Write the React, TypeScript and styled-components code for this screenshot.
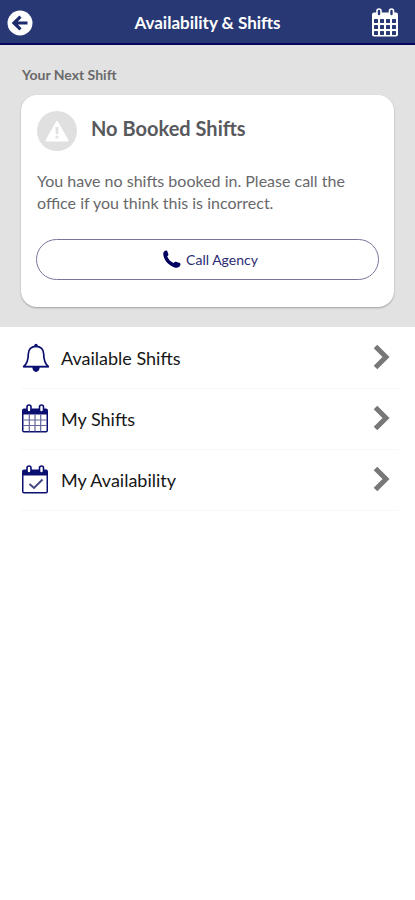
import React from "react";
import styled, { createGlobalStyle } from "styled-components";

const navy = "#0b1070";

const GlobalStyle = createGlobalStyle`
  *, *::before, *::after { box-sizing: border-box; }
  body {
    margin: 0;
    background: #fff;
    font-family: Lato, "Open Sans", sans-serif;
  }
  button { font-family: inherit; cursor: pointer; }
  svg { display: block; flex: none; }
`;

const Header = styled.header`
  display: grid;
  grid-template-columns: 28px 1fr 28px;
  align-items: center;
  height: 45px;
  padding: 2px 16px 0 6px;
  background: #273875;
  border-bottom: 2px solid #07075f;
  color: #fff;
`;

const Title = styled.h1`
  margin: 0;
  padding-left: 10px;
  text-align: center;
  font-size: 17px;
  line-height: 24px;
  font-weight: 700;
`;

const IconButton = styled.button`
  display: flex;
  align-items: center;
  justify-content: center;
  padding: 0;
  border: 0;
  background: none;
  color: inherit;
`;

const NextShift = styled.section`
  padding: 20px 21px;
  background: #e2e2e2;
`;

const SectionTitle = styled.h2`
  margin: 0 0 10px;
  padding: 0 1px;
  font-size: 14px;
  line-height: 20px;
  font-weight: 700;
  color: #6a6a6a;
`;

const Card = styled.article`
  padding: 16px 15px 27px;
  border-radius: 16px;
  background: #fff;
  box-shadow: 0 1px 2px rgba(0, 0, 0, 0.3);
`;

const CardHead = styled.div`
  display: flex;
  align-items: center;
  gap: 14px;
  padding: 0 1px;
`;

const CardTitle = styled.h3`
  margin: 0;
  padding-bottom: 6px;
  font-size: 20px;
  line-height: 24px;
  font-weight: 700;
  color: #58595d;
`;

const CardText = styled.p`
  margin: 19px 0 25px;
  padding: 0 1px;
  font-size: 16px;
  line-height: 22px;
  color: #68686b;
`;

const CallButton = styled.button`
  display: flex;
  align-items: center;
  justify-content: center;
  gap: 5px;
  width: 100%;
  height: 41px;
  padding: 0 0 0 6px;
  border: 1px solid #77779c;
  border-radius: 21px;
  background: #fff;
  color: #2b2b72;
  font-size: 14px;
  line-height: 20px;
`;

const Menu = styled.nav`
  padding: 1px 17px 0 21px;
`;

const MenuLink = styled.a`
  display: grid;
  grid-template-columns: 28px 1fr 18px;
  align-items: center;
  column-gap: 12px;
  height: 61px;
  padding-right: 7px;
  border-bottom: 1px solid #f8f8f8;
  color: #161616;
  font-size: 18px;
  line-height: 24px;
  text-decoration: none;
`;

function BackIcon() {
  return (
    <svg width="26" height="26" viewBox="0 0 26 26" aria-hidden="true">
      <circle cx="13" cy="13" r="12.5" fill="#fff" />
      <path d="M20.5 13H8M13.5 6.6 7 13l6.5 6.4" fill="none" stroke="#1c2b6c" strokeWidth="3.2" />
    </svg>
  );
}

function CalendarIcon({ check = false, solid = false }: { check?: boolean; solid?: boolean }) {
  const ink = solid ? "#fff" : navy;
  const gap = solid ? "#273875" : "#fff";
  return (
    <svg width="28" height="30" viewBox="0 0 28 30" aria-hidden="true">
      <rect x="1" y="4.500" width="26" height="24" rx="2" fill={ink} />
      {solid ? (
        <g fill={gap}>
          {[11, 17, 23].map((y) =>
            [3, 9, 15, 21].map((x) => (
              <rect key={`${x}-${y}`} x={x} y={y} width="4" height="4" rx="0.5" />
            ))
          )}
        </g>
      ) : (
        <rect x="2.500" y="10.500" width="23" height="16.500" fill={gap} />
      )}
      {!solid && !check && (
        <path
          d="M8.300 10.500v17M14 10.500v17M19.700 10.500v17M2.500 16h23M2.500 21.500h23"
          stroke="#62659c"
          strokeWidth="1.2"
        />
      )}
      {check && <path d="m8.500 19 4.500 4 8.500-8.500" fill="none" stroke="#45487f" strokeWidth="2" />}
      {[8, 20.5].map((x) => (
        <rect
          key={x}
          x={x - 2}
          y="1"
          width="4"
          height="7"
          rx="2"
          fill={gap}
          stroke={ink}
          strokeWidth="1.6"
        />
      ))}
    </svg>
  );
}

function WarningIcon() {
  return (
    <svg width="40" height="40" viewBox="0 0 40 40" aria-hidden="true">
      <circle cx="20" cy="20" r="20" fill="#e0e0e0" />
      <path
        d="M20 11 30.500 29.500h-21Z"
        fill="#fff"
        stroke="#fff"
        strokeWidth="2"
        strokeLinejoin="round"
      />
      <path d="M18.400 16h3.200l-.5 7h-2.200Z" fill="#e0e0e0" />
      <circle cx="20" cy="26" r="1.600" fill="#e0e0e0" />
    </svg>
  );
}

function PhoneIcon() {
  return (
    <svg width="18" height="20" viewBox="0 0 18 20" aria-hidden="true">
      <path
        d="M.6 2.200C1.200.9 3 0 4 .6l1.400 3.600c.2.900-.4 1.500-1.200 2.100.9 2.900 3.300 5.500 6.300 6.800.8-.9 1.500-1.500 2.500-1.400l3.800 1.200c1.200.6.7 2.600-.6 3.900-1.200 1.200-3.400 1.300-5.300.4C5.600 15.100 1.700 10.700.6 6.200.2 4.600.1 3.300.6 2.200Z"
        fill="#000060"
      />
    </svg>
  );
}

function BellIcon() {
  return (
    <svg width="28" height="30" viewBox="0 0 28 30" aria-hidden="true">
      <path
        d="M15 3.300c-4.600 0-7.700 3.200-7.700 7.700 0 6.500-1.300 9.800-4.600 12.500h24.600C24 20.800 22.700 17.500 22.700 11c0-4.500-3.100-7.700-7.700-7.700Z"
        fill="none"
        stroke={navy}
        strokeWidth="1.700"
        strokeLinejoin="round"
      />
      <circle cx="15" cy="2.500" r="1.700" fill={navy} />
      <path
        d="M2.200 23.800h25.600M12 25h6c-.3 2-1.300 3.300-3 3.300s-2.700-1.300-3-3.300Z"
        fill={navy}
        stroke={navy}
        strokeWidth="1.2"
      />
    </svg>
  );
}

function ChevronIcon() {
  return (
    <svg width="18" height="28" viewBox="0 0 18 28" aria-hidden="true">
      <path d="m2.500 2.500 10.500 10.500L2.500 23.500" fill="none" stroke="#777" strokeWidth="5" />
    </svg>
  );
}

const menuItems = [
  { label: "Available Shifts", href: "#available-shifts", icon: <BellIcon /> },
  { label: "My Shifts", href: "#my-shifts", icon: <CalendarIcon /> },
  { label: "My Availability", href: "#my-availability", icon: <CalendarIcon check /> },
];

export default function App() {
  return (
    <>
      <GlobalStyle />
      <Header>
        <IconButton type="button" aria-label="Back">
          <BackIcon />
        </IconButton>
        <Title>Availability &amp; Shifts</Title>
        <IconButton type="button" aria-label="Calendar">
          <CalendarIcon solid />
        </IconButton>
      </Header>
      <main>
        <NextShift>
          <SectionTitle>Your Next Shift</SectionTitle>
          <Card>
            <CardHead>
              <WarningIcon />
              <CardTitle>No Booked Shifts</CardTitle>
            </CardHead>
            <CardText>
              You have no shifts booked in. Please call the office if you think this is incorrect.
            </CardText>
            <CallButton type="button">
              <PhoneIcon />
              Call Agency
            </CallButton>
          </Card>
        </NextShift>
        <Menu aria-label="Shifts">
          {menuItems.map((item) => (
            <MenuLink key={item.label} href={item.href}>
              {item.icon}
              {item.label}
              <ChevronIcon />
            </MenuLink>
          ))}
        </Menu>
      </main>
    </>
  );
}
